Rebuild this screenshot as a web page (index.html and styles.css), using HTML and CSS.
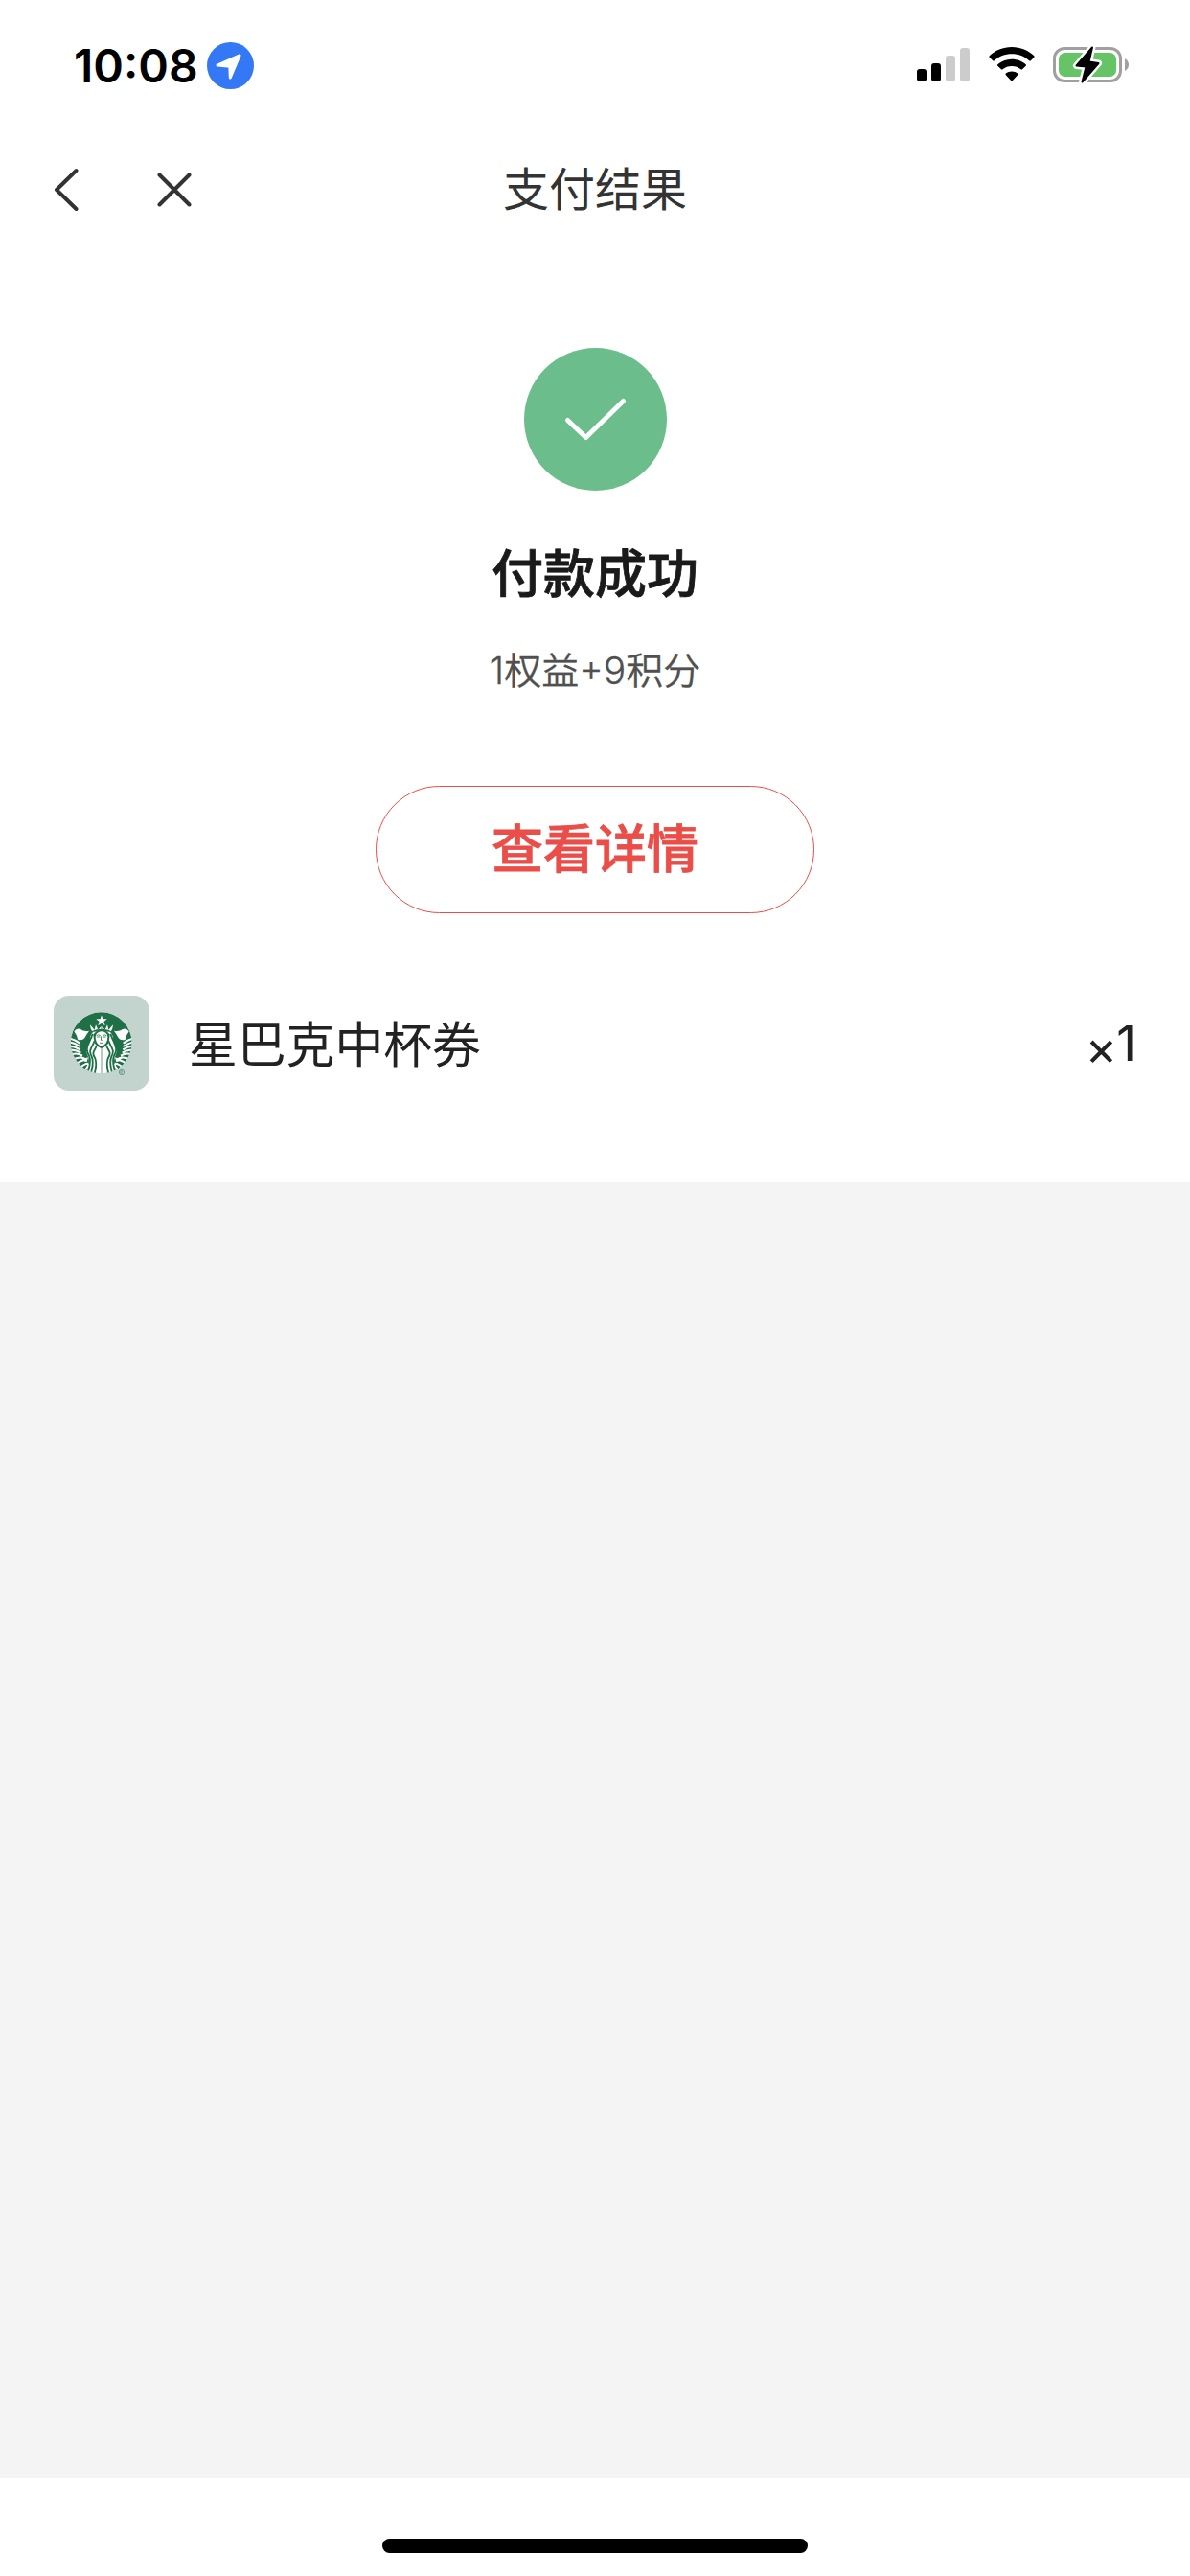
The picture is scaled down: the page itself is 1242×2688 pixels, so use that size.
FILE: index.html
```html
<!DOCTYPE html>
<html lang="zh-CN">
<head>
  <meta charset="UTF-8">
  <meta name="viewport" content="width=device-width, initial-scale=1.0">
  <title>支付结果</title>
  <link rel="stylesheet" href="styles.css">
</head>
<body>
  <div class="status-bar">
    <div class="status-left">
      <span class="time">10:08</span>
      <svg class="location" width="49" height="49" viewBox="0 0 49 49">
        <circle cx="24.5" cy="24.5" r="24.5" fill="#3478f6"/>
        <path d="M11 24 L34 13.8 L24.3 37 L23.8 25.3 Z" fill="#fff" stroke="#fff" stroke-width="3" stroke-linejoin="round"/>
      </svg>
    </div>
    <div class="status-right">
      <svg width="55" height="36" viewBox="0 0 55 36">
        <rect x="0" y="22" width="10" height="13" rx="3"/>
        <rect x="15" y="16" width="10" height="19" rx="3"/>
        <rect x="30" y="8" width="10" height="27" rx="3" fill="#ccc"/>
        <rect x="45" y="0" width="10" height="35" rx="3" fill="#ccc"/>
      </svg>
      <svg class="wifi" width="48" height="36" viewBox="0 0 48 36">
        <path d="M24 0 C33 0 41.500 3.500 47.300 9.300 Q48 10 47.300 10.800 L43.800 14.300 Q43 15 42.200 14.300 C37.500 9.800 31 7.300 24 7.300 C17 7.300 10.500 9.800 5.800 14.300 Q5 15 4.200 14.300 L.7 10.800 Q0 10 .7 9.300 C6.500 3.500 15 0 24 0Z"/>
        <path d="M24 12.700 C29.700 12.700 35 14.900 38.700 18.200 Q39.500 19 38.700 19.800 L35 23.300 Q34.300 24 33.500 23.300 C31 21.200 27.700 20 24 20 C20.300 20 17 21.200 14.500 23.300 Q13.700 24 13 23.300 L9.300 19.800 Q8.500 19 9.300 18.200 C13 14.900 18.300 12.700 24 12.700Z"/>
        <path d="M24 25.500 C26.500 25.500 28.600 26.300 30.200 27.600 Q31 28.400 30.200 29.200 L24.800 34.900 Q24 35.700 23.200 34.900 L17.800 29.200 Q17 28.400 17.800 27.600 C19.400 26.300 21.500 25.500 24 25.500Z"/>
      </svg>
      <svg class="battery" width="80" height="40" viewBox="0 0 80 40">
        <rect x="1.500" y="3.500" width="69" height="34" rx="10.500" fill="none" stroke="#a0a0a0" stroke-width="3"/>
        <path d="M75 14 Q79 16.500 79 20.500 Q79 24.500 75 27Z" fill="#a0a0a0"/>
        <rect x="6" y="8" width="60" height="25" rx="6.500" fill="#65c466"/>
        <path d="M41 2.500 L24.500 21.500 L34.500 22.500 L30.500 38.500 L47.500 19 L37.500 17.500 Z" stroke="#fff" stroke-width="7" stroke-linejoin="round"/>
        <path d="M41 2.500 L24.500 21.500 L34.500 22.500 L30.500 38.500 L47.500 19 L37.500 17.500 Z" stroke="#000" stroke-width="2" stroke-linejoin="round"/>
      </svg>
    </div>
  </div>

  <header>
    <div class="nav-buttons">
      <svg width="26" height="46" viewBox="0 0 26 46"><path d="M23.500 3 L3 23 L23.500 43"/></svg>
      <svg width="36" height="36" viewBox="0 0 36 36"><path d="M2.500 2.500 L33.500 33.500 M33.500 2.500 L2.500 33.500"/></svg>
    </div>
    <h1>支付结果</h1>
  </header>

  <main>
    <section class="result">
      <svg class="success" width="149" height="149" viewBox="0 0 149 149">
        <circle cx="74.500" cy="74.500" r="74.500" fill="#6bbe8b"/>
        <path d="M45.500 75.500 L64.500 93.500 L103.500 55.500" fill="none" stroke="#fff" stroke-width="5" stroke-linecap="round" stroke-linejoin="round"/>
      </svg>
      <h2>付款成功</h2>
      <p class="amount">1权益+9积分</p>
      <a class="detail-btn">查看详情</a>
    </section>

    <div class="item">
      <svg class="item-logo" width="100" height="99" viewBox="0 0 300 297">
        <defs>
          <clipPath id="disc"><circle cx="149" cy="148" r="96"/></clipPath>
          <g id="half">
            <!-- tail fin -->
            <path d="M64 112 Q72 100 84 105 Q94 113 111 110 Q104 119 99 129 Q92 142 76 138 Q73 123 64 112Z" fill="#fff"/>
            <!-- scales -->
            <g fill="none" stroke="#fff" stroke-width="6">
              <path d="M50 133 Q66 137 82 149"/>
              <path d="M48 145 Q64 147 83 159"/>
              <path d="M48 158 Q66 157 83 169"/>
              <path d="M50 171 Q68 167 85 179"/>
              <path d="M54 186 Q70 176 90 188"/>
              <path d="M60 202 Q75 189 96 196"/>
              <path d="M67 216 Q87 200 105 201"/>
              <path d="M77 228 Q98 211 109 212"/>
              <path d="M90 240 Q107 226 110 213"/>
            </g>
            <path d="M84 187 Q94 199 108 193 L104 207 Q90 208 84 187Z" fill="#fff"/>
            <!-- hair -->
            <path d="M124 113 Q113 123 114 138 C113 156 96 165 106 186 C115 204 110 226 102 247 L149 247 L149 112Z" fill="#fff"/>
            <g fill="none" stroke="#1f7046" stroke-width="5.500">
              <path d="M122 119 C112 151 95 162 111 188 C118 205 110 232 105 247"/>
              <path d="M127 142 C125 158 106 168 119 190 C128 211 119 229 116 247"/>
              <path d="M134 156 C133 169 116 175 129 194 C138 214 130 231 128 247"/>
            </g>
            <path d="M149 96 L139 107 L132 91 L128 107 L114 91 Q115 104 120 111 Q134 104 149 104Z" fill="#fff"/>
          </g>
        </defs>
        <rect width="300" height="297" fill="#c3d3ce"/>
        <g clip-path="url(#disc)">
          <circle cx="149" cy="148" r="96" fill="#1f7046"/>
          <use href="#half"/>
          <use href="#half" transform="translate(300 0) scale(-1 1)"/>
          <path d="M150 61 L154 73 L167 73 L157 81 L161 94 L150 86 L139 94 L143 81 L133 73 L146 73Z" fill="#fff"/>
          <path d="M124 122 Q132 109 150 109 Q168 109 176 122 L173 145 Q166 161 150 165 Q134 161 127 145Z" fill="#1f7046"/>
          <path d="M131 128 Q133 114 150 112 Q168 114 169 128 C169 145 161 155 150 157 C139 155 131 145 131 128Z" fill="#fff"/>
          <path d="M134 125 Q140 120 146 125 M154 125 Q160 120 166 125 M136 129 H145 M155 129 H164 M149 127 L148 139 H152 M144 147 Q150 150 156 147" fill="none" stroke="#1f7046" stroke-width="2.500"/>
        </g>
        <circle cx="213" cy="240" r="8" fill="none" stroke="#5d9579" stroke-width="2.500"/>
        <path d="M210 245 V236 H214 Q217 239 211 241 L216 245" fill="none" stroke="#5d9579" stroke-width="2"/>
      </svg>
      <span class="item-name">星巴克中杯券</span>
      <span class="item-count"><span class="times">×</span>1</span>
    </div>
  </main>

  <footer><div class="home-indicator"></div></footer>
</body>
</html>
```
FILE: styles.css
```css
:root {
  --bg: #f4f4f4;
  --fg: #222;
  --red: #ea4e49;
  --cjk: "Noto Sans CJK SC", sans-serif;
}
* { box-sizing: border-box; margin: 0; padding: 0; }
body {
  display: flex;
  flex-direction: column;
  width: 1242px;
  height: 2688px;
  background: var(--bg);
  color: var(--fg);
  font-family: Inter, var(--cjk);
}
svg { display: block; flex: none; }

.status-bar {
  display: flex;
  justify-content: space-between;
  height: 132px;
  padding: 44px 63px 0 77px;
  background: #fff;
  color: #000;
}
.status-left { display: flex; height: 49px; align-items: center; }
.time { width: 139px; font-size: 48px; font-weight: 600; line-height: 49px; }
.status-right { display: flex; align-items: flex-start; padding-top: 6px; }
.wifi { margin: -1px 19px 0 20px; }
.battery { margin-top: -3px; }

header {
  display: grid;
  grid-template-columns: 1fr auto 1fr;
  align-items: center;
  height: 132px;
  padding: 0 56px;
  background: #fff;
}
.nav-buttons { display: flex; align-items: center; gap: 82px; }
.nav-buttons path { fill: none; stroke: #333; stroke-width: 4; stroke-linecap: round; stroke-linejoin: round; }
h1 { padding-bottom: 8px; font-family: var(--cjk); font-size: 48px; font-weight: 400; line-height: 66px; color: #333; }

main { height: 969px; padding: 99px 56px 0; background: #fff; }
.result { display: flex; flex-direction: column; align-items: center; }
h2 {
  margin-top: 44px;
  font-family: var(--cjk);
  font-size: 54px;
  font-weight: 500;
  line-height: 80px;
  color: #1a1a1a;
  -webkit-text-stroke: 0.8px;
}
.amount { margin-top: 34px; font-size: 39px; font-weight: 350; line-height: 60px; color: #505050; -webkit-text-stroke: 0.3px; }
.detail-btn {
  width: 458px;
  height: 133px;
  margin-top: 90px;
  border: 1px solid var(--red);
  border-radius: 67px;
  font-family: var(--cjk);
  font-size: 54px;
  font-weight: 500;
  line-height: 123px;
  text-align: center;
  color: var(--red);
  -webkit-text-stroke: 0.8px;
}
.item { display: flex; align-items: center; height: 99px; margin-top: 86px; font-size: 51px; line-height: 99px; }
.item-logo { border-radius: 16px; }
.item-name { margin-left: 41px; padding-bottom: 3px; font-family: var(--cjk); font-size: 50.800px; }
.item-count { margin-left: auto; }
.times { position: relative; top: 5px; margin-right: -1px; }

footer {
  display: flex;
  justify-content: center;
  height: 102px;
  margin-top: auto;
  padding-top: 63px;
  background: #fff;
}
.home-indicator { width: 444px; height: 15px; border-radius: 8px; background: #000; }
```
